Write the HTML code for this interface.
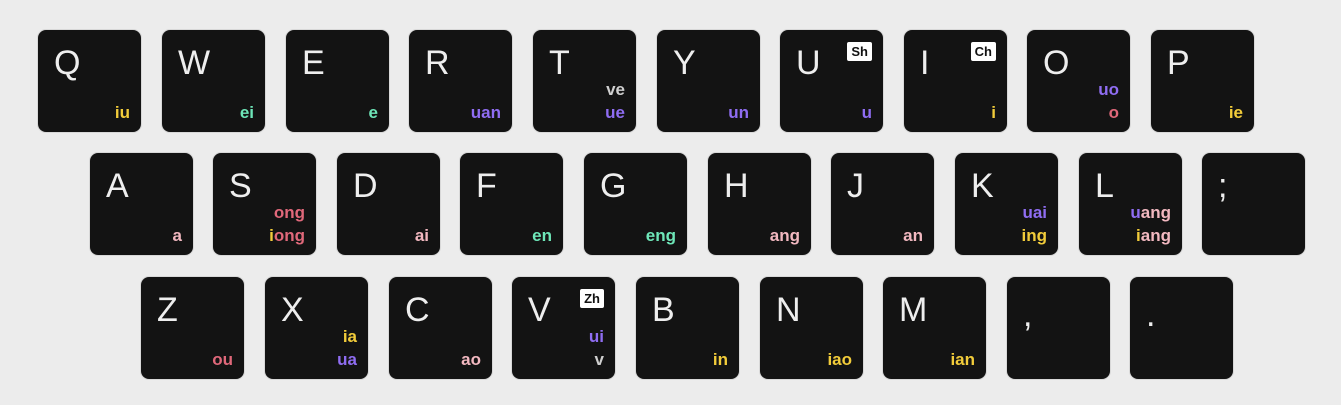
<!DOCTYPE html><html><head><style>
body{margin:0;width:1341px;height:405px;background:#ececec;position:relative;overflow:hidden;font-family:"Liberation Sans",sans-serif}
.k{position:absolute;width:103px;height:102px;background:#131313;border-radius:8px;box-shadow:0 0 0 1px #d8d8d8}
.l{position:absolute;left:16px;top:13px;font-size:34px;color:#eeeeee;font-weight:normal;line-height:40px}
.s{position:absolute;right:11px;bottom:8px;text-align:right;font-weight:bold;font-size:17px;line-height:23px}
.b{position:absolute;right:11px;top:12px;background:#fff;color:#111;font-weight:bold;font-size:13px;padding:1px 4px;border-radius:2px;line-height:17px}
.y{color:#f2cc3a}.g{color:#6ee6b8}.p{color:#8f6df2}.r{color:#e0687a}.k2{color:#f2b8c0}.w{color:#cfcfcf}
</style></head><body>
<div class="k" style="left:38px;top:30px"><div class="l">Q</div><div class="s y">iu</div></div>
<div class="k" style="left:162px;top:30px"><div class="l">W</div><div class="s g">ei</div></div>
<div class="k" style="left:286px;top:30px"><div class="l">E</div><div class="s g">e</div></div>
<div class="k" style="left:409px;top:30px"><div class="l">R</div><div class="s p">uan</div></div>
<div class="k" style="left:533px;top:30px"><div class="l">T</div><div class="s"><span class="w">ve</span><br><span class="p">ue</span></div></div>
<div class="k" style="left:657px;top:30px"><div class="l">Y</div><div class="s p">un</div></div>
<div class="k" style="left:780px;top:30px"><div class="l">U</div><div class="b">Sh</div><div class="s p">u</div></div>
<div class="k" style="left:904px;top:30px"><div class="l">I</div><div class="b">Ch</div><div class="s y">i</div></div>
<div class="k" style="left:1027px;top:30px"><div class="l">O</div><div class="s"><span class="p">uo</span><br><span class="r">o</span></div></div>
<div class="k" style="left:1151px;top:30px"><div class="l">P</div><div class="s y">ie</div></div>

<div class="k" style="left:90px;top:153px"><div class="l">A</div><div class="s k2">a</div></div>
<div class="k" style="left:213px;top:153px"><div class="l">S</div><div class="s"><span class="r">ong</span><br><span class="y">i</span><span class="r">ong</span></div></div>
<div class="k" style="left:337px;top:153px"><div class="l">D</div><div class="s k2">ai</div></div>
<div class="k" style="left:460px;top:153px"><div class="l">F</div><div class="s g">en</div></div>
<div class="k" style="left:584px;top:153px"><div class="l">G</div><div class="s g">eng</div></div>
<div class="k" style="left:708px;top:153px"><div class="l">H</div><div class="s k2">ang</div></div>
<div class="k" style="left:831px;top:153px"><div class="l">J</div><div class="s k2">an</div></div>
<div class="k" style="left:955px;top:153px"><div class="l">K</div><div class="s"><span class="p">uai</span><br><span class="y">ing</span></div></div>
<div class="k" style="left:1079px;top:153px"><div class="l">L</div><div class="s"><span class="p">u</span><span class="k2">ang</span><br><span class="y">i</span><span class="k2">ang</span></div></div>
<div class="k" style="left:1202px;top:153px"><div class="l">;</div></div>

<div class="k" style="left:141px;top:277px"><div class="l">Z</div><div class="s r">ou</div></div>
<div class="k" style="left:265px;top:277px"><div class="l">X</div><div class="s"><span class="y">ia</span><br><span class="p">ua</span></div></div>
<div class="k" style="left:389px;top:277px"><div class="l">C</div><div class="s k2">ao</div></div>
<div class="k" style="left:512px;top:277px"><div class="l">V</div><div class="b">Zh</div><div class="s"><span class="p">ui</span><br><span class="w">v</span></div></div>
<div class="k" style="left:636px;top:277px"><div class="l">B</div><div class="s y">in</div></div>
<div class="k" style="left:760px;top:277px"><div class="l">N</div><div class="s y">iao</div></div>
<div class="k" style="left:883px;top:277px"><div class="l">M</div><div class="s y">ian</div></div>
<div class="k" style="left:1007px;top:277px"><div class="l" style="top:18px">,</div></div>
<div class="k" style="left:1130px;top:277px"><div class="l" style="top:18px">.</div></div>
</body></html>
